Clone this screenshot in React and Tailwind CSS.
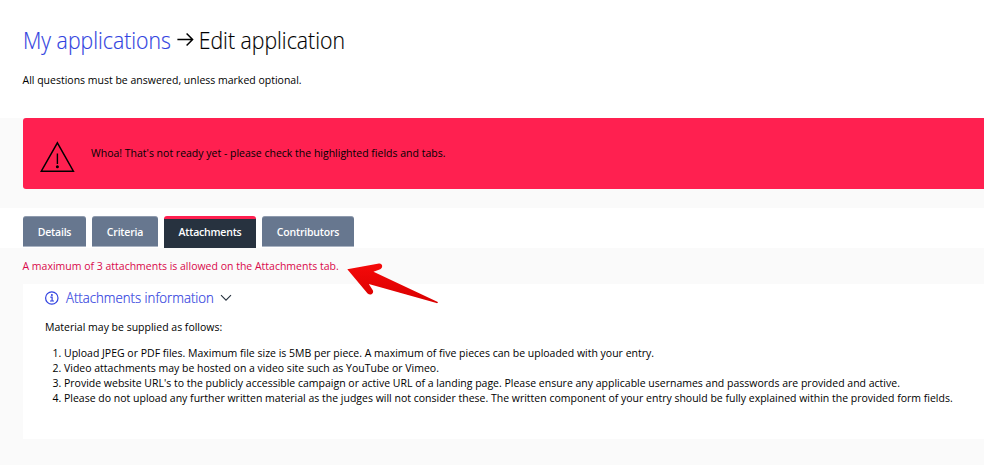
import React from 'react';

// ============================================
// ICONS
// ============================================

const ArrowIcon = () => (
  <svg className="w-[19.5px] h-[16px] shrink-0" viewBox="0 0 18 16" preserveAspectRatio="none" fill="none" stroke="currentColor" strokeWidth="1.5">
    <path d="M1 7.5h15M10.2 1.5L16.2 7.5L10.2 13.5" />
  </svg>
);

const WarningIcon = () => (
  <svg className="w-[36px] h-[32px] shrink-0" viewBox="0 0 36 32" fill="none" stroke="currentColor">
    <path d="M18.4 1.8L34.4 30.2H2.3Z" strokeWidth="1.5" />
    <path d="M18.4 12.5v10.5" strokeWidth="1.4" />
    <circle cx="18.4" cy="25.7" r="1.5" fill="currentColor" stroke="none" />
  </svg>
);

const InfoIcon = () => (
  <svg className="w-[14px] h-[14px] shrink-0" viewBox="0 0 14 14" fill="none" stroke="currentColor">
    <circle cx="6.8" cy="7" r="6.2" strokeWidth="1.2" />
    <path d="M5.3 6.2H7.1V10M5 10h4" strokeWidth="1.2" />
    <circle cx="6.9" cy="3.9" r="1" fill="currentColor" stroke="none" />
  </svg>
);

const ChevronIcon = () => (
  <svg className="w-[12px] h-[8px] shrink-0" viewBox="0 0 12 8" fill="none" stroke="#27323f" strokeWidth="1.1">
    <path d="M1 1.2L6 6.2L11 1.2" />
  </svg>
);

const PointerArrow = () => (
  <svg className="absolute left-[345px] top-[13px] w-[96px] h-[46px]" viewBox="345 261 96 46">
    <defs>
      <linearGradient id="pointer" x1="0" y1="0" x2="0" y2="1">
        <stop offset="0" stopColor="#f50a0a" />
        <stop offset="1" stopColor="#d90000" />
      </linearGradient>
    </defs>
    <path
      d="M347.3 269.2L379 263.6C382.6 263.2 383.4 267.8 380.2 269.2L373.5 271.7L437.8 302Q438.3 303.3 436.5 303.1L368.8 284L372.8 290.2C374.3 293.5 370.3 296 367.6 293.4Z"
      fill="url(#pointer)"
    />
  </svg>
);

// ============================================
// TABS
// ============================================

const tabs = [
  { label: 'Details', width: 'w-[63px]' },
  { label: 'Criteria', width: 'w-[66px]' },
  { label: 'Attachments', width: 'w-[92px]', active: true },
  { label: 'Contributors', width: 'w-[92px]' }
];

const Tab = ({ label, width, active }) => (
  <button
    className={`flex items-center justify-center rounded-t-[3px] text-[10.5px] tracking-[-0.2px] font-semibold text-white ${width} ${
      active
        ? 'h-[32px] bg-[#27323f] border-t-3 border-[#ff2050] pb-[3px]'
        : 'h-[31px] bg-[#67778f] border-y border-t-[#8f9bae] border-b-[#a9b3c2] pt-[1px]'
    }`}
  >
    {label}
  </button>
);

const rules = [
  'Upload JPEG or PDF files. Maximum file size is 5MB per piece. A maximum of five pieces can be uploaded with your entry.',
  'Video attachments may be hosted on a video site such as YouTube or Vimeo.',
  "Provide website URL's to the publicly accessible campaign or active URL of a landing page. Please ensure any applicable usernames and passwords are provided and active.",
  'Please do not upload any further written material as the judges will not consider these. The written component of your entry should be fully explained within the provided form fields.'
];

export default function App() {
  return (
    <div className="w-full h-[465px] overflow-hidden bg-[#fafafa] text-black text-[10.5px] leading-[15px] whitespace-nowrap font-['Open_Sans','Noto_Sans',sans-serif]">
      <header className="h-[118px] bg-white pl-[23px] pt-[24px]">
        <h1 className="flex items-center h-[32px] text-[23px] font-light leading-[32px] origin-left scale-x-[0.924] [-webkit-text-stroke:0.15px]">
          <a className="text-[#3142e0]">My applications</a>
          <span className="ml-[5.5px] mr-[5px]"><ArrowIcon /></span>
          <span>Edit application</span>
        </h1>
        <p className="mt-[17px] ml-[-0.5px]">All questions must be answered, unless marked optional.</p>
      </header>

      <div className="h-[90px] pl-[23px]">
        <div className="flex h-[71px] bg-[#ff2050] rounded-l-[3px] pl-[16px]">
          <div className="pt-[23px]"><WarningIcon /></div>
          <p className="ml-[16px] pt-[28px]">Whoa! That's not ready yet - please check the highlighted fields and tabs.</p>
        </div>
      </div>

      <nav className="flex gap-[6px] h-[40px] bg-white pl-[23px] pt-[8px]">
        {tabs.map(tab => (
          <Tab key={tab.label} {...tab} />
        ))}
      </nav>

      <div className="relative h-[36px] pl-[22.5px] pt-[11px] text-[#d9084a]">
        <p>A maximum of 3 attachments is allowed on the Attachments tab.</p>
        <PointerArrow />
      </div>

      <section className="ml-[23px] h-[155px] bg-white pl-[22px] pt-[4px]">
        <h2 className="flex items-center h-[20px] text-[14px] font-light text-[#3142e0]">
          <InfoIcon />
          <span className="ml-[6.5px] mr-[-2.5px] mt-[-1px] origin-left scale-x-[0.944] [-webkit-text-stroke:0.2px]">Attachments information</span>
          <ChevronIcon />
        </h2>
        <p className="mt-[12px]">Material may be supplied as follows:</p>
        <ol className="mt-[11px] pl-[19px] list-decimal">
          {rules.map(rule => (
            <li key={rule}>{rule}</li>
          ))}
        </ol>
      </section>
    </div>
  );
}
